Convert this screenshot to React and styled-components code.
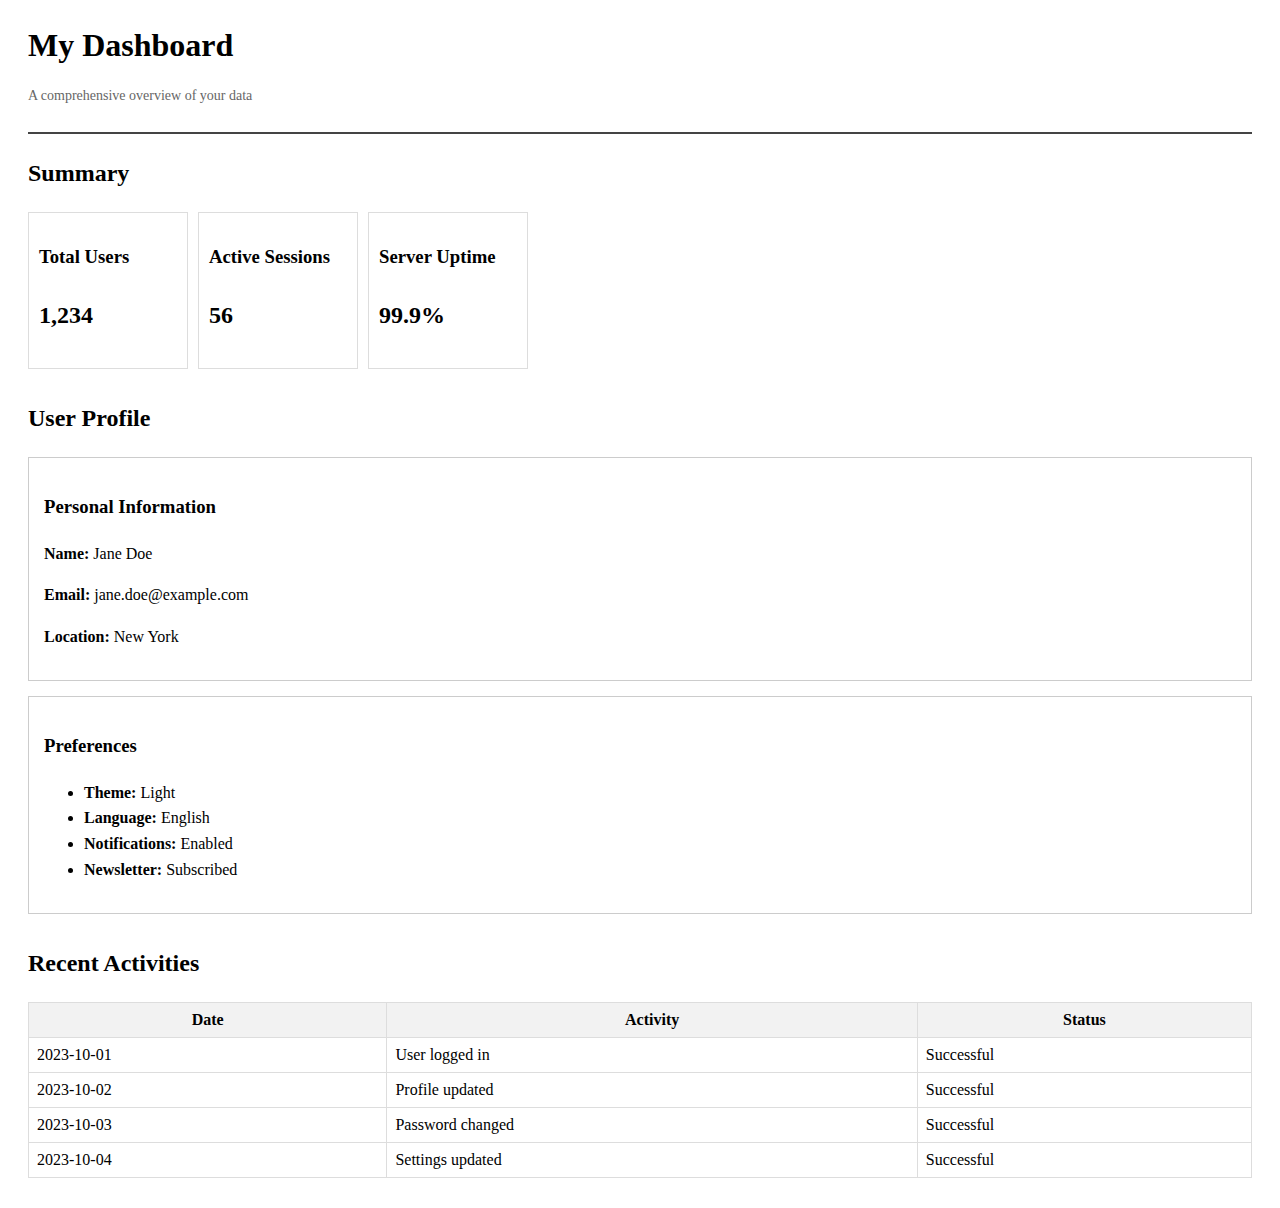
import React from 'react'
import styled, { createGlobalStyle } from 'styled-components'

const GlobalStyle = createGlobalStyle`
  body {
    margin: 0;
    font-family: "Liberation Serif", "Times New Roman", serif;
    line-height: 1.6;
    color: #000;
    background: #fff;
  }
`

const stats = [
  { label: 'Total Users', value: '1,234' },
  { label: 'Active Sessions', value: '56' },
  { label: 'Server Uptime', value: '99.9%' },
]

const activities = [
  { date: '2023-10-01', activity: 'User logged in', status: 'Successful' },
  { date: '2023-10-02', activity: 'Profile updated', status: 'Successful' },
  { date: '2023-10-03', activity: 'Password changed', status: 'Successful' },
  { date: '2023-10-04', activity: 'Settings updated', status: 'Successful' },
]

function App() {
  return (
    <Page>
      <GlobalStyle />
      <Header>
        <Title>My Dashboard</Title>
        <Subtitle>A comprehensive overview of your data</Subtitle>
      </Header>

      <Section>
        <SectionTitle>Summary</SectionTitle>
        <CardRow>
          {stats.map(s => (
            <Card key={s.label}>
              <CardTitle>{s.label}</CardTitle>
              <CardValue>{s.value}</CardValue>
            </Card>
          ))}
        </CardRow>
      </Section>

      <Section>
        <SectionTitle>User Profile</SectionTitle>
        <Box>
          <BoxTitle>Personal Information</BoxTitle>
          <Field><strong>Name:</strong> Jane Doe</Field>
          <Field><strong>Email:</strong> jane.doe@example.com</Field>
          <Field><strong>Location:</strong> New York</Field>
        </Box>
        <Box>
          <BoxTitle>Preferences</BoxTitle>
          <List>
            <li><strong>Theme:</strong> Light</li>
            <li><strong>Language:</strong> English</li>
            <li><strong>Notifications:</strong> Enabled</li>
            <li><strong>Newsletter:</strong> Subscribed</li>
          </List>
        </Box>
      </Section>

      <Section>
        <SectionTitle>Recent Activities</SectionTitle>
        <Table>
          <thead>
            <tr>
              <Th>Date</Th>
              <Th>Activity</Th>
              <Th>Status</Th>
            </tr>
          </thead>
          <tbody>
            {activities.map(a => (
              <tr key={a.date}>
                <Td>{a.date}</Td>
                <Td>{a.activity}</Td>
                <Td>{a.status}</Td>
              </tr>
            ))}
          </tbody>
        </Table>
      </Section>
    </Page>
  )
}

const Page = styled.div`
  padding: 20px 28px;
`

const Header = styled.header`
  padding-bottom: 24px;
  border-bottom: 2px solid #444;
  margin-bottom: 20px;
`

const Title = styled.h1`
  margin: 0;
  font-size: 32px;
  font-weight: bold;
`

const Subtitle = styled.p`
  margin: 14px 0 0;
  font-size: 14px;
  color: #666;
`

const Section = styled.section`
  margin-bottom: 30px;
`

const SectionTitle = styled.h2`
  font-size: 24px;
  margin: 19.92px 0;
`

const CardRow = styled.div`
  display: flex;
  gap: 10px;
`

const Card = styled.div`
  box-sizing: border-box;
  width: 160px;
  padding: 10px;
  border: 1px solid #ddd;
`

const CardTitle = styled.h3`
  font-size: 18.72px;
  margin: 18.72px 0;
`

const CardValue = styled.p`
  font-size: 24px;
  font-weight: bold;
  margin: 24px 0;
`

const Box = styled.div`
  border: 1px solid #ccc;
  padding: 15px;
  margin-bottom: 15px;
`

const BoxTitle = styled.h3`
  font-size: 18.72px;
  margin: 18.72px 0;
`

const Field = styled.p`
  font-size: 16px;
  margin: 16px 0;
`

const List = styled.ul`
  margin: 16px 0;
  padding-left: 40px;
`

const Table = styled.table`
  width: 100%;
  border-collapse: collapse;
  line-height: normal;
  font-size: 16px;
`

const Th = styled.th`
  border: 1px solid #ddd;
  padding: 8px;
  background: #f2f2f2;
  font-weight: bold;
  text-align: center;
`

const Td = styled.td`
  border: 1px solid #ddd;
  padding: 8px;
  text-align: left;
`

export default App
